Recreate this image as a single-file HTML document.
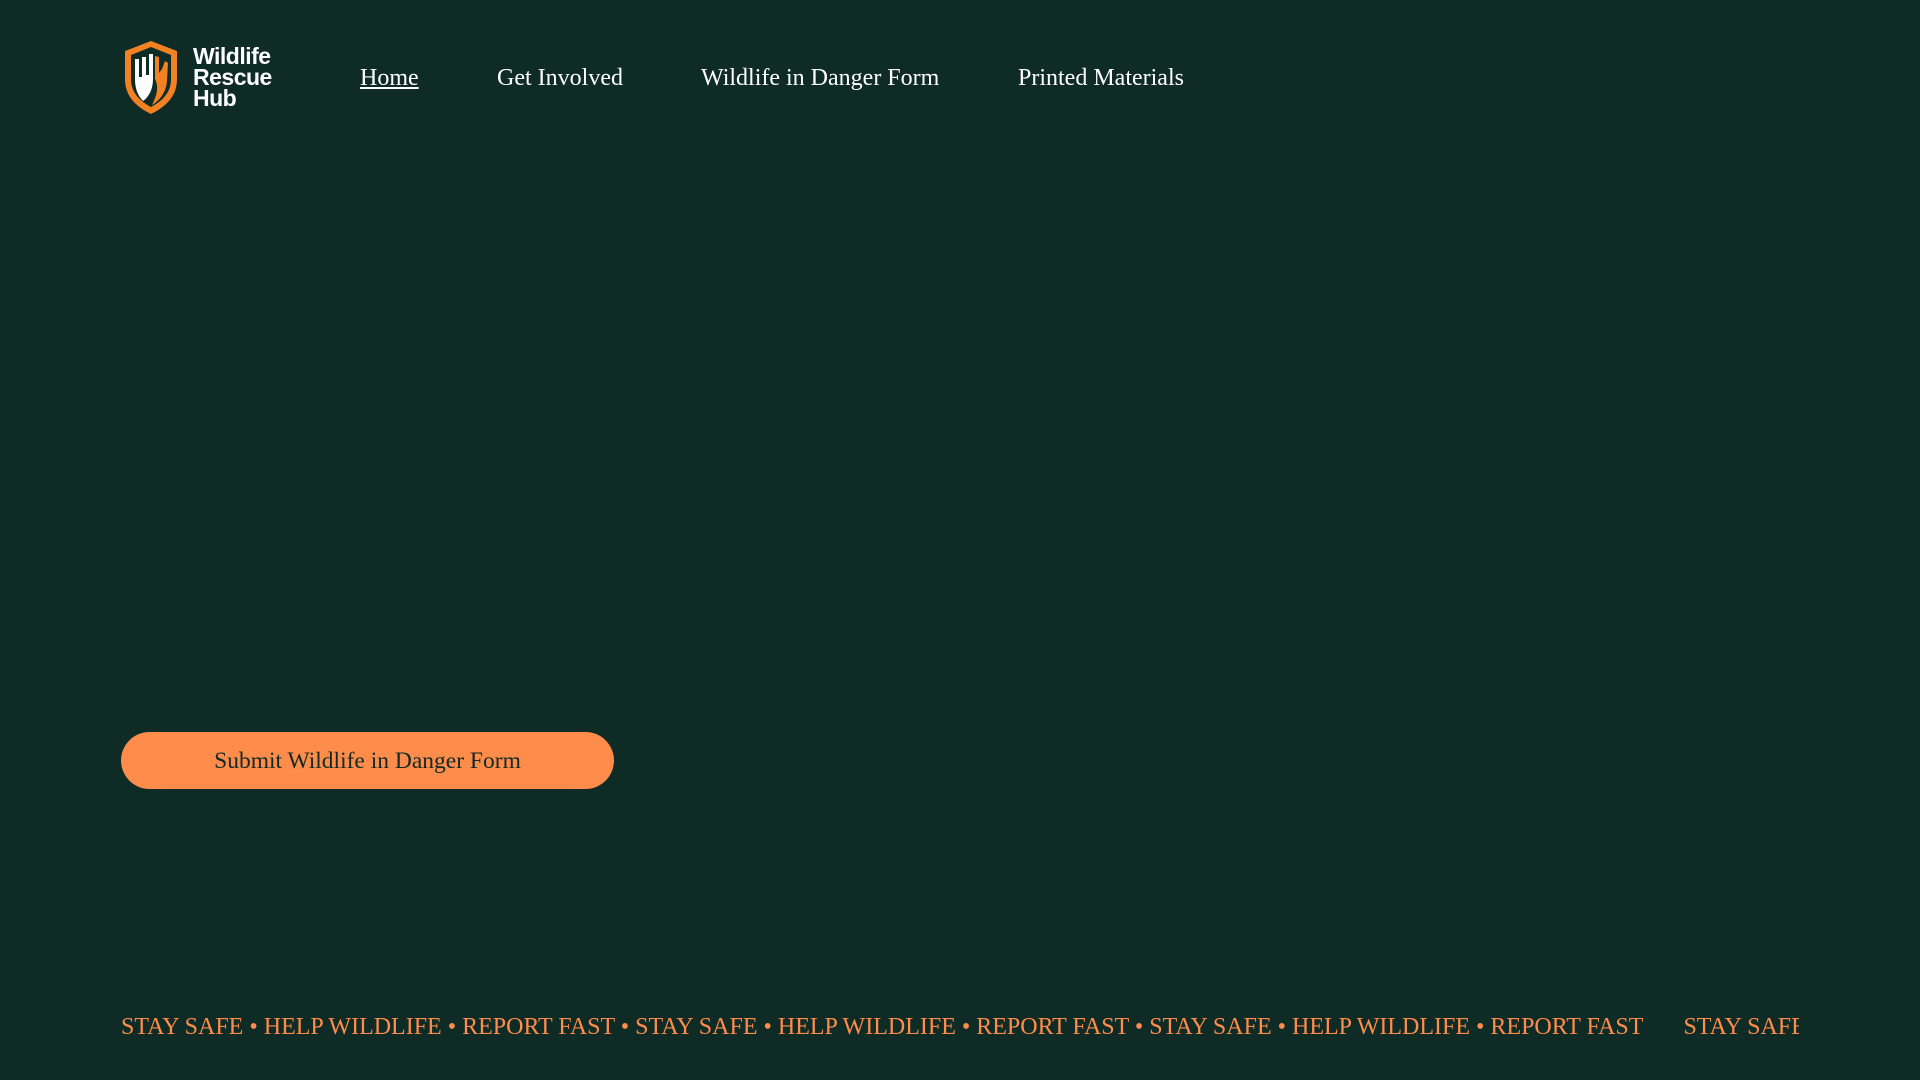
<!DOCTYPE html>
<html><head><meta charset="utf-8"><style>
html,body{margin:0;padding:0;}
body{width:1920px;height:1080px;background:#0e2b25;position:relative;overflow:hidden;font-family:"Liberation Serif",serif;}
.logo{position:absolute;left:121px;top:39px;}
.logotext{position:absolute;left:193px;top:46px;color:#fff;font-family:"Liberation Sans",sans-serif;font-weight:bold;font-size:23px;line-height:21px;letter-spacing:-0.5px;}
.nav a{position:absolute;top:63px;color:#fff;font-size:24px;text-decoration:none;line-height:30px;}
.btn{position:absolute;left:121px;top:732px;width:493px;height:57px;border-radius:29px;background:#ff8c4b;color:#0e2b25;font-size:23.5px;line-height:59px;text-align:center;}
.ticker{position:absolute;left:121px;top:1011px;width:1678px;overflow:hidden;white-space:nowrap;color:#ff8c4b;font-size:24px;line-height:32px;}
.ticker span{display:inline-block;margin-right:40px;}
</style></head><body>
<svg class="logo" width="60" height="76" viewBox="0 0 60 76">
<path d="M30 2 L56 12 L56 40 C56 58 44 68 30 75 C16 68 4 58 4 40 L4 12 Z" fill="#f28123"/>
<path d="M30 8 L50 16 L50 40 C50 54 41 62 30 68 C19 62 10 54 10 40 L10 16 Z" fill="#0e2b25"/>
<path d="M14 20 L18 20 L18 38 L21 38 L21 18 L25 18 L25 36 L28 36 L28 15 L32 15 L32 40 C32 50 28 58 22 62 C16 56 14 48 14 40 Z" fill="#fff"/>
<path d="M34 17 L38 18 L38 34 L41 30 L44 22 L47 24 L46 42 C45 54 38 62 31 66 C36 56 38 48 34 40 Z" fill="#f28123"/>
</svg>
<div class="logotext">Wildlife<br>Rescue<br>Hub</div>
<div class="nav">
<a style="left:360px;text-decoration:underline">Home</a>
<a style="left:497px">Get Involved</a>
<a style="left:701px">Wildlife in Danger Form</a>
<a style="left:1018px">Printed Materials</a>
</div>
<div class="btn">Submit Wildlife in Danger Form</div>
<div class="ticker"><span>STAY SAFE • HELP WILDLIFE • REPORT FAST • STAY SAFE • HELP WILDLIFE • REPORT FAST • STAY SAFE • HELP WILDLIFE • REPORT FAST</span><span>STAY SAFE • HELP WILDLIFE • REPORT FAST</span></div>
</body></html>
